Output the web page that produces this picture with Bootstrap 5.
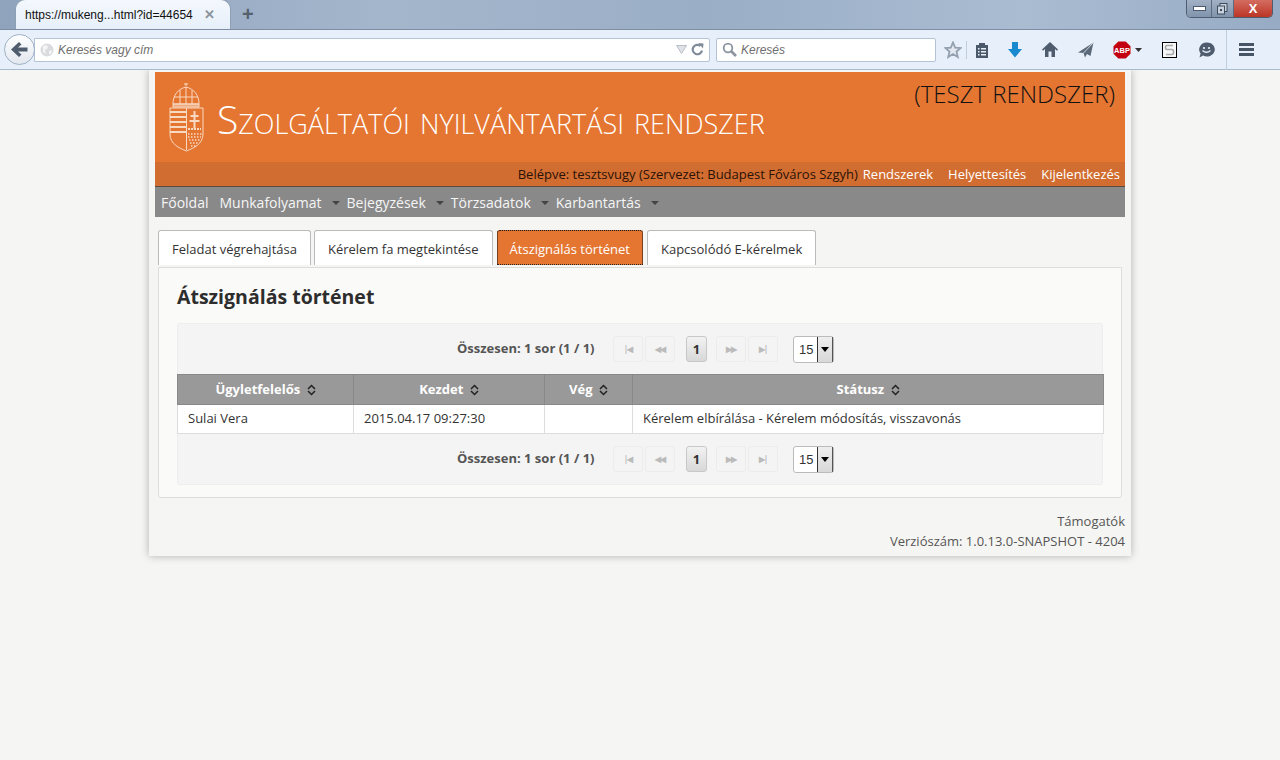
<!DOCTYPE html>
<html lang="hu">
<head>
<meta charset="UTF-8">
<meta name="viewport" content="width=device-width, initial-scale=1.0">
<title>Átszignálás történet</title>
<link rel="stylesheet" href="https://cdn.jsdelivr.net/npm/bootstrap@5.3.0/dist/css/bootstrap.min.css">
<script src="https://cdn.jsdelivr.net/npm/bootstrap@5.3.0/dist/js/bootstrap.bundle.min.js"></script>
<style>
html, body { height: 100%; }
body { background: #f5f5f3; font-family: "Open Sans", "Noto Sans", sans-serif; font-size: 13px; color: #333; overflow: hidden; }
/* browser chrome */
.tabstrip { height: 30px; background: linear-gradient(90deg, #8fa3bd 0%, #a4b6cc 30%, #9aaec6 55%, #a9bcd2 80%, #97abc4 100%); border-bottom: 1px solid #7d8ea3; position: relative; }
.brtab { width: 216px; height: 30px; margin-left: 15px; padding-left: 9px; background: linear-gradient(#f4f8fd, #e6eff9); border: 1px solid #8fa0b5; border-bottom: 0; border-radius: 10px 10px 0 0; font-family: "Liberation Sans", sans-serif; font-size: 12px; color: #111; }
.brtab-x { margin-left: 11px; color: #8a929c; font-size: 13px; font-weight: bold; }
.brplus { margin-left: 11px; margin-top: -1px; color: #56616e; font-size: 20px; font-weight: bold; font-family: "Liberation Sans", sans-serif; }
.winbtns { position: absolute; top: 0; right: 7px; width: 87px; height: 18px; border: 1px solid #4e5d70; border-top: 0; border-radius: 0 0 5px 5px; overflow: hidden; }
.winbtn-min { width: 24px; background: linear-gradient(#a2b1c5, #8094ad); }
.winbtn-max { width: 22px; background: linear-gradient(#a2b1c5, #8094ad); border-left: 1px solid #5d6c80; }
.winbtn-close { flex: 1; background: linear-gradient(#d46c60, #bb3526); border-left: 1px solid #5d6c80; color: #fff; font: bold 13px/17px "Liberation Sans", sans-serif; text-align: center; }
.toolbar { height: 40px; background: #e7f0fa; border-bottom: 1px solid #a8bad0; position: relative; padding-left: 34px; }
.backbtn { position: absolute; left: 4px; top: 4px; width: 31px; height: 31px; border: 1px solid #9fb0c5; border-radius: 50%; background: linear-gradient(#fdfeff, #e3e8ef); z-index: 1; }
.urlbar { width: 676px; height: 24px; background: #fff; border: 1px solid #b4c3d6; border-radius: 0 2px 2px 0; padding: 0 5px; font-family: "Liberation Sans", sans-serif; font-style: italic; font-size: 12px; color: #6f6f6f; }
.searchbar { width: 220px; height: 24px; margin-left: 6px; background: #fff; border: 1px solid #b4c3d6; border-radius: 2px; padding: 0 5px; font-family: "Liberation Sans", sans-serif; font-style: italic; font-size: 12px; color: #6f6f6f; }
.toolicons { height: 40px; }
.sep-v { width: 1px; background: #bfcddd; }
/* page */
.pagebox { width: 982px; height: 486px; margin-left: 149px; padding: 2px 6px 0; background: #f5f5f3; box-shadow: 0 0 8px rgba(0,0,0,.28); }
.brandhead { height: 90px; background: #e57632; padding: 0 10px 0 14px; position: relative; }
.brandtitle { margin: 3px 0 0 13px; font-weight: 300; font-size: 39px; line-height: 1; color: #fff; font-variant: small-caps; white-space: nowrap; }
.testlabel { position: absolute; top: 6px; right: 10px; font-weight: 300; font-size: 24px; line-height: 32px; color: #111; }
.userbar { height: 25px; background: #d16d30; border-bottom: 1px solid #5c4a3e; padding-right: 5px; font-size: 13px; line-height: 25px; color: #2a1208; }
.userbar a { color: #fff; text-decoration: none; margin-left: 15px; }
.userbar a:first-of-type { margin-left: 5px; }
.mainmenu { height: 30px; background: #898989; padding-left: 6px; font-size: 14px; }
.mainmenu a { color: #f5f5f5; text-decoration: none; }
.menu-caret { display: inline-block; width: 0; height: 0; margin: 0 7px 2px 10px; border: 4px solid transparent; border-top: 4px solid #444; border-bottom: 0; vertical-align: middle; }
.tabrow { padding: 13px 3px 0; gap: 3px; height: 49px; }
.pagetab { height: 35px; padding: 0 13px; background: #fff; border: 1px solid #bbb; border-bottom: 0; border-radius: 3px 3px 0 0; color: #333; line-height: 36px; text-decoration: none; }
.pagetab-on { padding: 0 12px; margin: 0 1px; background: #e57632; color: #fff; outline: 1px dotted #222; outline-offset: -1px; border-color: #c46226; }
.tabpanel { margin: 1px 3px 0; height: 231px; padding: 16px 18px 0; background: #fafaf8; border: 1px solid #ddd; border-radius: 0 0 3px 3px; }
.tabpanel h2 { margin: 0 0 13px; height: 26px; font-size: 19.5px; line-height: 26px; font-weight: 700; color: #2d2d2d; }
.pgbar { height: 51px; background: #f4f4f4; border: 1px solid #eee; padding-left: 279px; color: #555; font-weight: 700; }
.pgbar-top { border-bottom: 0; border-radius: 3px 3px 0 0; }
.pgbar-bot { border-top: 0; border-radius: 0 0 3px 3px; }
.pgcount { width: 156px; }
.pgbtn { width: 30px; height: 26px; margin-right: 2px; border: 1px solid #ececec; border-radius: 3px; background: #f4f4f4; color: #bbb; font-size: 8px; text-align: center; line-height: 24px; letter-spacing: -1px; }
.pgbtn-cur { width: 21px; margin: 0 9px 0 9px; border-color: #c8c8c8; background: linear-gradient(#f2f2f2, #d8d8d8); color: #333; font-size: 13px; font-weight: 700; letter-spacing: 0; }
.pgsize { width: 41px; height: 27px; margin-left: 13px; border: 1px solid #bbb; border-radius: 3px; background: #fff; font: 400 13px/25px "Liberation Sans", sans-serif; color: #333; padding-left: 5px; position: relative; }
.pgsize-arrow { position: absolute; right: 0; top: 0; bottom: 0; width: 16px; background: linear-gradient(#eee, #d8d8d8); border-left: 1px solid #333; border-right: 1px solid #555; }
.pgsize-arrow::after { content: ""; position: absolute; left: 3px; top: 10px; border: 4px solid transparent; border-top: 5px solid #000; border-bottom: 0; }
.histtable { width: 927px; table-layout: fixed; margin: 0; border-collapse: collapse; font-size: 13px; }
.histtable th { height: 30px; padding: 0; background: #999; color: #fff; font-weight: 700; text-align: center; vertical-align: middle; border: 1px solid #888; }
.histtable td { height: 29px; padding: 0 10px; background: #fff; color: #333; vertical-align: middle; border: 1px solid #ddd; }
.sortmark { display: inline-block; width: 9px; height: 12px; margin-left: 3px; vertical-align: -2px; }
.foot-links { margin-top: 13px; padding-right: 0; color: #555; line-height: 20px; text-align: right; }
</style>
</head>
<body>

<div class="tabstrip d-flex align-items-end">
    <div class="brtab d-flex align-items-center">https://mukeng...html?id=44654 <span class="brtab-x">✕</span></div>
    <div class="brplus align-self-center">+</div>
    <div class="winbtns d-flex">
        <div class="winbtn-min d-flex align-items-center justify-content-center">
            <svg width="13" height="5" viewBox="0 0 13 5"><rect x=".5" y=".5" width="12" height="4" fill="#fff" stroke="#4b5a6c"/></svg>
        </div>
        <div class="winbtn-max d-flex align-items-center justify-content-center">
            <svg width="11" height="12" viewBox="0 0 11 12"><rect x="3" y=".5" width="7" height="8" fill="#c8d2df" stroke="#3f4c5c"/><rect x=".5" y="3" width="7" height="8" fill="#c8d2df" stroke="#3f4c5c"/><rect x="3" y="6" width="2" height="2" fill="#3f4c5c"/></svg>
        </div>
        <div class="winbtn-close">X</div>
    </div>
</div>

<div class="toolbar d-flex align-items-center">
    <div class="backbtn d-flex align-items-center justify-content-center">
        <svg width="17" height="15" viewBox="0 0 17 15"><path d="M8 0 L0 7.5 L8 15 L10.5 12.5 L7 9.5 H16.5 V5.5 H7 L10.5 2.5Z" fill="#4e5c6d"/></svg>
    </div>
    <div class="urlbar d-flex align-items-center flex-shrink-0">
        <svg class="me-1" width="14" height="14" viewBox="0 0 14 14"><circle cx="7" cy="7" r="6.5" fill="#d9dbde"/><path d="M3 3 L7 2 L8 5 L5 7 L6 11 L3 9Z M9 8 L12 7 L11 11 L9 11Z" fill="#f4f4f4"/></svg>
        <span>Keresés vagy cím</span>
        <svg class="ms-auto" width="11" height="9" viewBox="0 0 11 9"><path d="M.5 .5 H10.5 L5.5 8.5Z" fill="#dfe3e8" stroke="#b7bec7"/></svg>
        <svg class="ms-1" width="13" height="13" viewBox="0 0 13 13"><path d="M11 7.5 A4.7 4.7 0 1 1 9.5 3" fill="none" stroke="#7f8b99" stroke-width="2.2"/><path d="M7.5 0 L12.5 .5 L12 5.5Z" fill="#7f8b99"/></svg>
    </div>
    <div class="searchbar d-flex align-items-center flex-shrink-0">
        <svg class="me-1" width="15" height="15" viewBox="0 0 15 15"><circle cx="6" cy="6" r="4.3" fill="none" stroke="#8b949f" stroke-width="1.8"/><path d="M9 9 L14 14" stroke="#8b949f" stroke-width="2.6"/></svg>
        <span>Keresés</span>
    </div>
    <div class="toolicons d-flex align-items-center">
        <svg class="ms-2" width="18" height="18" viewBox="0 0 18 18" style="margin-left:11px"><path d="M9 1.5 L11.2 6.6 L16.6 7 L12.5 10.6 L13.8 16 L9 13.1 L4.2 16 L5.5 10.6 L1.4 7 L6.8 6.6Z" fill="#e3e9f1" stroke="#93a0af" stroke-width="1.8"/></svg>
        <div class="sep-v ms-1" style="height:18px"></div>
        <svg class="ms-2" width="14" height="16" viewBox="0 0 14 16"><path d="M1 3 H4 V1 H10 V3 H13 V16 H1Z" fill="#4a5869"/><path d="M3 6 H4.5 V7.5 H3Z M6 6 H11 V7.5 H6Z M3 9 H4.5 V10.5 H3Z M6 9 H11 V10.5 H6Z M3 12 H4.5 V13.5 H3Z M6 12 H11 V13.5 H6Z" fill="#e7f0fa"/></svg>
        <svg style="margin-left:19px" width="14" height="16" viewBox="0 0 14 16"><path d="M4 0 H10 V7 H14 L7 15.5 L0 7 H4Z" fill="#1a8ad0"/></svg>
        <svg style="margin-left:20px" width="16" height="15" viewBox="0 0 16 15"><path d="M8 0 L0 7.5 L1 8.8 L3 7 V15 H6.5 V9.5 H9.5 V15 H13 V7 L15 8.8 L16 7.5Z" fill="#4e5c6d"/></svg>
        <svg style="margin-left:20px" width="16" height="16" viewBox="0 0 16 16"><path d="M15.5 .5 L0 10.5 L5.5 11 L7 15.5 L9 12 L12.5 14Z" fill="#5c6978"/><path d="M15 1 L5.5 11" stroke="#e7f0fa" stroke-width=".8"/></svg>
        <svg style="margin-left:19px" width="18" height="18" viewBox="0 0 18 18"><path d="M5.3 .5 H12.7 L17.5 5.3 V12.7 L12.7 17.5 H5.3 L.5 12.7 V5.3Z" fill="#c30010"/><text x="9" y="11.6" text-anchor="middle" font-family="Liberation Sans" font-weight="700" font-size="7.5" fill="#fff">ABP</text></svg>
        <svg class="ms-1" width="7" height="4" viewBox="0 0 7 4"><path d="M0 0 H7 L3.5 4Z" fill="#333"/></svg>
        <svg style="margin-left:20px" width="15" height="16" viewBox="0 0 15 16"><rect x=".5" y=".5" width="14" height="15" fill="#f5f7f9" stroke="#000"/><path d="M11 3.5 H5 Q3.5 3.5 3.5 5.5 Q3.5 7.5 5 7.5 H10 Q11.5 7.5 11.5 10 Q11.5 12.5 10 12.5 H4" fill="none" stroke="#a8a8a8" stroke-width="1.6"/></svg>
        <svg style="margin-left:21px" width="17" height="16" viewBox="0 0 17 16"><path d="M8.5 .5 A7.8 7 0 1 1 5 13.5 L1.5 15.5 L2.6 11.5 A7.8 7 0 0 1 8.5 .5Z" fill="#4e5c6d"/><circle cx="6" cy="6" r="1.1" fill="#e7f0fa"/><circle cx="11" cy="6" r="1.1" fill="#e7f0fa"/><path d="M4.5 8.5 Q8.5 12 12.5 8.5" fill="none" stroke="#e7f0fa" stroke-width="1.3"/></svg>
        <div class="sep-v" style="height:40px;margin-left:11px"></div>
        <svg style="margin-left:12px" width="15" height="13" viewBox="0 0 15 13"><path d="M0 0 H15 V3 H0Z M0 5 H15 V8 H0Z M0 10 H15 V13 H0Z" fill="#465466"/></svg>
    </div>
</div>

<div class="pagebox">
    <div class="brandhead d-flex align-items-center">
        <svg width="35" height="70" viewBox="0 0 35 70" fill="none" stroke="#f8d9c2" stroke-width="1">
            <path d="M17 1 V4 M15 2 H19"/>
            <path d="M17 5 C9 7 4 13 4 22 H30 C30 13 25 7 17 5Z"/>
            <path d="M11 8 V22 M23 8 V22 M17 5 V22 M5 15 H29"/>
            <path d="M4 22 H30 V25 H4Z" fill="#f8d9c2" fill-opacity=".5"/>
            <path d="M1 26 H34 V52 C34 62 25 66 17.5 69 C10 66 1 62 1 52Z"/>
            <path d="M17.5 26 V68"/>
            <path d="M1 30 H17 M1 35 H17 M1 40 H17 M1 45 H17 M1 50 H17" stroke-width="2.2"/>
            <path d="M25.5 29 V47 M21.5 34 H29.5 M20.5 39 H30.5" stroke-width="2"/>
            <path d="M19 47 H32" stroke-dasharray="2 1" stroke-width="2"/>
            <path d="M19 52 L33 52 M19 55 L32 55 M20 58 L31 58 M21 61 L29 61 M22 64 L27 64" stroke-dasharray="1.5 1.5" stroke-width="1.5"/>
        </svg>
        <div class="brandtitle">Szolgáltatói nyilvántartási rendszer</div>
        <div class="testlabel">(TESZT RENDSZER)</div>
    </div>
    <div class="userbar d-flex justify-content-end">
        <span>Belépve: tesztsvugy (Szervezet: Budapest Főváros Szgyh)</span>
        <a href="#">Rendszerek</a>
        <a href="#">Helyettesítés</a>
        <a href="#">Kijelentkezés</a>
    </div>
    <div class="mainmenu d-flex align-items-center">
        <a href="#" class="me-2" style="margin-right:11px!important">Főoldal</a>
        <a href="#">Munkafolyamat<span class="menu-caret"></span></a>
        <a href="#">Bejegyzések<span class="menu-caret"></span></a>
        <a href="#">Törzsadatok<span class="menu-caret"></span></a>
        <a href="#">Karbantartás<span class="menu-caret"></span></a>
    </div>

    <div class="tabrow d-flex">
        <a href="#" class="pagetab">Feladat végrehajtása</a>
        <a href="#" class="pagetab">Kérelem fa megtekintése</a>
        <a href="#" class="pagetab pagetab-on">Átszignálás történet</a>
        <a href="#" class="pagetab">Kapcsolódó E-kérelmek</a>
    </div>

    <div class="tabpanel">
        <h2>Átszignálás történet</h2>

        <div class="pgbar pgbar-top d-flex align-items-center">
            <span class="pgcount">Összesen: 1 sor (1 / 1)</span>
            <span class="pgbtn">|◀</span><span class="pgbtn">◀◀</span>
            <span class="pgbtn pgbtn-cur">1</span>
            <span class="pgbtn">▶▶</span><span class="pgbtn">▶|</span>
            <span class="pgsize">15<span class="pgsize-arrow"></span></span>
        </div>

        <table class="histtable">
            <colgroup><col width="176"><col width="191"><col width="88"><col></colgroup>
            <thead>
                <tr>
                    <th>Ügyletfelelős <svg class="sortmark" viewBox="0 0 9 12"><path d="M1 5 L4.5 1.5 L8 5 M1 7 L4.5 10.5 L8 7" fill="none" stroke="#222" stroke-width="1.5"/></svg></th>
                    <th>Kezdet <svg class="sortmark" viewBox="0 0 9 12"><path d="M1 5 L4.5 1.5 L8 5 M1 7 L4.5 10.5 L8 7" fill="none" stroke="#222" stroke-width="1.5"/></svg></th>
                    <th>Vég <svg class="sortmark" viewBox="0 0 9 12"><path d="M1 5 L4.5 1.5 L8 5 M1 7 L4.5 10.5 L8 7" fill="none" stroke="#222" stroke-width="1.5"/></svg></th>
                    <th>Státusz <svg class="sortmark" viewBox="0 0 9 12"><path d="M1 5 L4.5 1.5 L8 5 M1 7 L4.5 10.5 L8 7" fill="none" stroke="#222" stroke-width="1.5"/></svg></th>
                </tr>
            </thead>
            <tbody>
                <tr>
                    <td>Sulai Vera</td>
                    <td>2015.04.17 09:27:30</td>
                    <td></td>
                    <td>Kérelem elbírálása - Kérelem módosítás, visszavonás</td>
                </tr>
            </tbody>
        </table>

        <div class="pgbar pgbar-bot d-flex align-items-center">
            <span class="pgcount">Összesen: 1 sor (1 / 1)</span>
            <span class="pgbtn">|◀</span><span class="pgbtn">◀◀</span>
            <span class="pgbtn pgbtn-cur">1</span>
            <span class="pgbtn">▶▶</span><span class="pgbtn">▶|</span>
            <span class="pgsize">15<span class="pgsize-arrow"></span></span>
        </div>
    </div>

    <div class="foot-links">
        <div>Támogatók</div>
        <div>Verziószám: 1.0.13.0-SNAPSHOT - 4204</div>
    </div>
</div>

</body>
</html>
